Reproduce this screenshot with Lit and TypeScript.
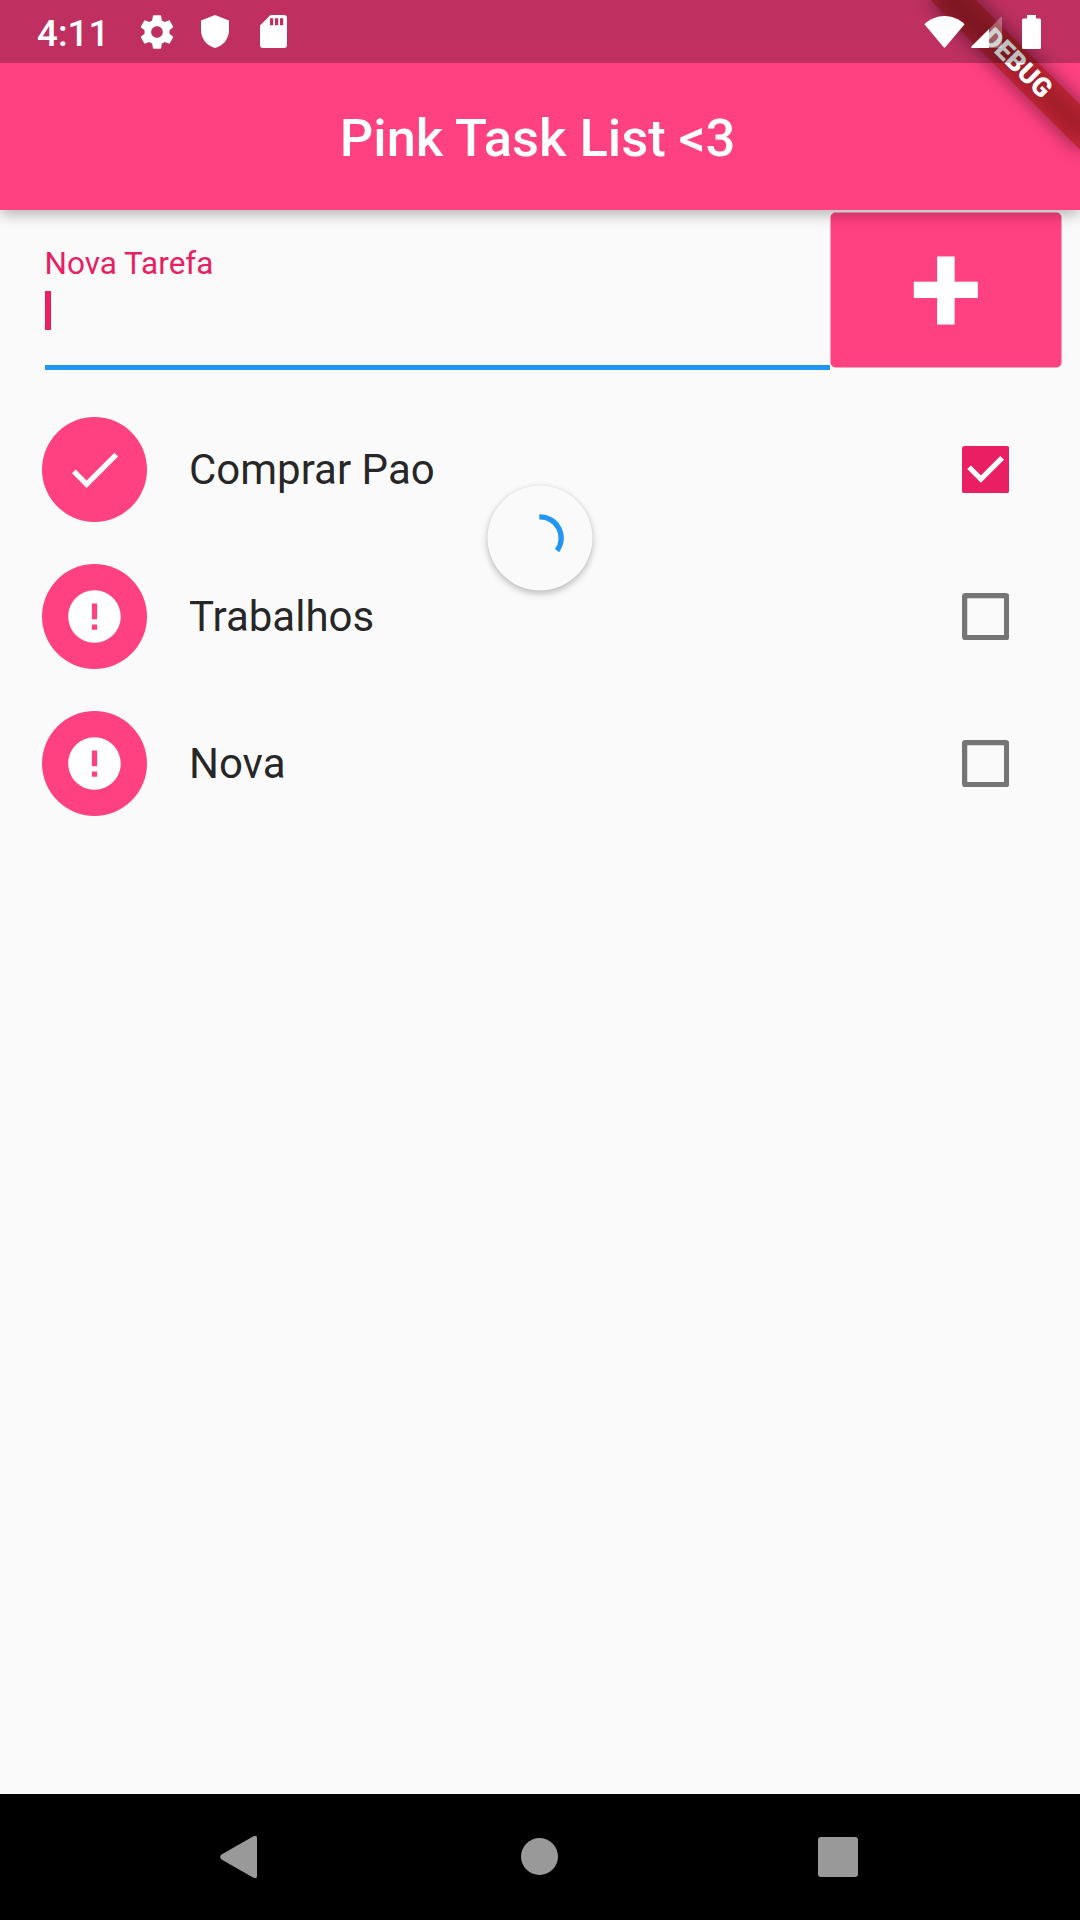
import { LitElement, html, css, svg } from "lit";
import { customElement, property } from "lit/decorators.js";

interface Task {
  title: string;
  done: boolean;
}

const CHECK = svg`<path fill="#fff" d="M9 16.17 4.83 12l-1.42 1.41L9 19 21 7l-1.41-1.41z"/>`;
const ERROR = svg`<path fill="#fff" d="M12 2C6.48 2 2 6.48 2 12s4.48 10 10 10 10-4.48 10-10S17.52 2 12 2zm1 15h-2v-2h2v2zm0-4h-2V7h2v6z"/>`;

@customElement("status-bar")
class StatusBar extends LitElement {
  static styles = css`
    :host {
      display: flex;
      align-items: center;
      box-sizing: border-box;
      height: 63px;
      padding: 0 39px 0 37px;
      background: rgba(0, 0, 0, 0.25);
      color: #fff;
      font: 500 36.75px/43px Roboto, sans-serif;
    }
    .time { width: 100px; padding-top: 3px; }
    svg { display: block; flex: none; }
    .shield { margin-left: 24px; }
    .card { margin-left: 30.5px; }
    .wifi { margin-left: auto; }
    .signal { margin-left: 6px; }
    .battery { margin-left: 20px; }
  `;

  render() {
    return html`
      <div class="time">4:11</div>
      <svg width="40" height="40" viewBox="0 0 24 24"><path fill="#fff" d="M19.43 12.98c.04-.32.07-.64.07-.98s-.03-.66-.07-.98l2.11-1.65c.19-.15.24-.42.12-.64l-2-3.46c-.12-.22-.39-.3-.61-.22l-2.49 1c-.52-.4-1.08-.73-1.69-.98l-.38-2.65C14.46 2.18 14.25 2 14 2h-4c-.25 0-.46.18-.49.42l-.38 2.65c-.61.25-1.17.59-1.69.98l-2.49-1c-.23-.09-.49 0-.61.22l-2 3.46c-.13.22-.07.49.12.64l2.11 1.65c-.04.32-.07.65-.07.98s.03.66.07.98l-2.11 1.65c-.19.15-.24.42-.12.64l2 3.46c.12.22.39.3.61.22l2.49-1c.52.4 1.08.73 1.69.98l.38 2.65c.03.24.24.42.49.42h4c.25 0 .46-.18.49-.42l.38-2.65c.61-.25 1.17-.59 1.69-.98l2.49 1c.23.09.49 0 .61-.22l2-3.46c.12-.22.07-.49-.12-.64l-2.11-1.65zM12 15.5c-1.93 0-3.5-1.57-3.5-3.5s1.57-3.5 3.5-3.5 3.5 1.57 3.5 3.5-1.57 3.5-3.5 3.5z"/></svg>
      <svg class="shield" width="28" height="33" viewBox="0 0 28 33"><path fill="#fff" d="M14 0 28 5.5V15c0 9-6 16-14 18C6 31 0 24 0 15V5.5z"/></svg>
      <svg class="card" width="27" height="33" viewBox="0 0 27 33"><path fill="#fff" fill-rule="evenodd" d="M10.5 0H24a3 3 0 0 1 3 3v27a3 3 0 0 1-3 3H3a3 3 0 0 1-3-3V10.5zM10 3.3v7h3.2v-7zm5 0v7h3.2v-7zm5 0v7h3.2v-7z"/></svg>
      <svg class="wifi" width="41" height="32" viewBox="0 0 41 32"><path fill="#fff" d="M.4 8.2C6 3 13 0 20.5 0S35 3 40.6 8.2L21.3 31.3q-.8.9-1.6 0z"/></svg>
      <svg class="signal" width="31" height="32" viewBox="0 0 31 32"><path fill="#fff" fill-opacity=".3" d="M18 13.3 29.5 1.3Q31 .2 31 2V32H18z"/><path fill="#fff" d="M18 13V32H1.2Q-.6 32 .6 30.2z"/></svg>
      <svg class="battery" width="19" height="34" viewBox="0 0 19 34"><path fill="#fff" d="M5 0h9v3.5h3.5A1.5 1.5 0 0 1 19 5v27.5a1.5 1.5 0 0 1-1.5 1.5h-16A1.5 1.5 0 0 1 0 32.5V5a1.5 1.5 0 0 1 1.5-1.5H5z"/></svg>
    `;
  }
}

@customElement("task-row")
class TaskRow extends LitElement {
  @property({ attribute: false }) task!: Task;

  static styles = css`
    :host {
      display: flex;
      align-items: center;
      box-sizing: border-box;
      height: 147px;
      padding: 0 70.9px 0 42px;
      font: 400 42px/49px Roboto, sans-serif;
      color: rgba(0, 0, 0, 0.87);
    }
    .avatar {
      display: grid;
      place-items: center;
      width: 105px;
      height: 105px;
      border-radius: 50%;
      background: #ff4081;
    }
    .title { flex: 1; margin-left: 42px; }
    svg { display: block; }
  `;

  render() {
    const { title, done } = this.task;
    return html`
      <div class="avatar"><svg width="63" height="63" viewBox="0 0 24 24">${done ? CHECK : ERROR}</svg></div>
      <div class="title">${title}</div>
      <svg width="47.25" height="47.25" viewBox="0 0 18 18">
        ${done
          ? svg`<rect width="18" height="18" rx="1" fill="#e91e63"/><path d="M2.7 8.1 7.2 12.6 15.3 4.5" fill="none" stroke="#fff" stroke-width="2"/>`
          : svg`<rect x="1" y="1" width="16" height="16" rx=".3" fill="none" stroke="#757575" stroke-width="2" stroke-linejoin="round"/>`}
      </svg>
    `;
  }
}

@customElement("app-root")
class AppRoot extends LitElement {
  tasks: Task[] = [
    { title: "Comprar Pao", done: true },
    { title: "Trabalhos", done: false },
    { title: "Nova", done: false },
  ];

  static styles = css`
    :host {
      display: flex;
      flex-direction: column;
      position: relative;
      width: 1080px;
      height: 1920px;
      overflow: hidden;
      background: #fafafa;
      font-family: Roboto, sans-serif;
    }
    status-bar { position: relative; z-index: 3; flex: none; }
    .appbar {
      position: relative;
      z-index: 1;
      box-sizing: border-box;
      flex: none;
      height: 210px;
      margin-top: -63px;
      padding: 65px 5px 0 0;
      display: flex;
      align-items: center;
      justify-content: center;
      background: #ff4081;
      box-shadow: 0 6px 13px -1px rgba(0, 0, 0, 0.27);
      color: #fff;
      font: 500 52.5px/62px Roboto, sans-serif;
    }
    .banner, .shade {
      position: absolute;
      z-index: 2;
      left: 975px;
      top: 73.5px;
      width: 210px;
      height: 31.5px;
      transform: rotate(45deg);
      transform-origin: 105px -73.5px;
    }
    .banner {
      background: rgba(183, 28, 28, 0.63);
      color: #fff;
      font: 900 26.775px/31.5px Roboto, sans-serif;
      text-align: center;
    }
    .shade {
      background: rgba(0, 0, 0, 0.5);
      filter: blur(9.6px);
    }
    .form {
      display: flex;
      align-items: flex-start;
      padding: 2.4px 19px 0 44.5px;
    }
    .field {
      flex: 1;
      box-sizing: border-box;
      height: 157.6px;
      padding-top: 32.6px;
      border-bottom: 5px solid #2196f3;
      color: #e91e63;
      font-size: 31.5px;
      line-height: 37px;
    }
    .cursor {
      width: 5.5px;
      height: 39.5px;
      margin: 9px 0 0 0.6px;
      background: #e91e63;
    }
    .add {
      width: 231px;
      height: 155px;
      border: 0;
      padding: 0 0 3px;
      border-radius: 5px;
      background: #ff4081;
      color: #fff;
      font: 700 131.25px/152px Roboto, sans-serif;
      text-align: center;
      transform: translate(0.5px, 0.5px);
    }
    .list { position: relative; flex: 1; padding-top: 26px; }
    .refresh {
      position: absolute;
      left: 487px;
      top: 115px;
      width: 105px;
      height: 105px;
      border-radius: 50%;
      background: #fafafa;
      box-shadow: 0 3px 7px rgba(0, 0, 0, 0.25), 0 0 2px rgba(0, 0, 0, 0.08);
      transform: translate(0.5px, 0.5px);
    }
    .refresh svg { display: block; }
    .nav {
      flex: none;
      height: 126px;
      display: flex;
      align-items: center;
      justify-content: space-between;
      box-sizing: border-box;
      padding: 0 222px 0 220px;
      background: #000;
    }
    .nav svg { display: block; }
    .home { margin: 0 0 1px 3px; }
  `;

  render() {
    return html`
      <status-bar></status-bar>
      <header class="appbar">Pink Task List &lt;3</header>
      <div class="shade"></div>
      <div class="banner">DEBUG</div>
      <div class="form">
        <div class="field">
          <div>Nova Tarefa</div>
          <div class="cursor"></div>
        </div>
        <button class="add">+</button>
      </div>
      <main class="list">
        ${this.tasks.map((t) => html`<task-row .task=${t}></task-row>`)}
        <div class="refresh">
          <svg width="105" height="105" viewBox="-52.5 -52.5 105 105"><path d="M-.7-21A21 21 0 0 1 17 12.6" fill="none" stroke="#2196f3" stroke-width="5.25"/></svg>
        </div>
      </main>
      <nav class="nav">
        <svg width="37" height="42" viewBox="0 0 37 42"><path fill="#999" d="M33 .6Q37-1.5 37 2V40Q37 43.5 33 41.4L1.5 23.5Q-1 21 1.5 18.5z"/></svg>
        <svg class="home" width="37" height="37" viewBox="0 0 37 37"><circle cx="18.5" cy="18.5" r="18.5" fill="#999"/></svg>
        <svg width="40" height="40" viewBox="0 0 40 40"><rect width="40" height="40" rx="3" fill="#999"/></svg>
      </nav>
    `;
  }
}
